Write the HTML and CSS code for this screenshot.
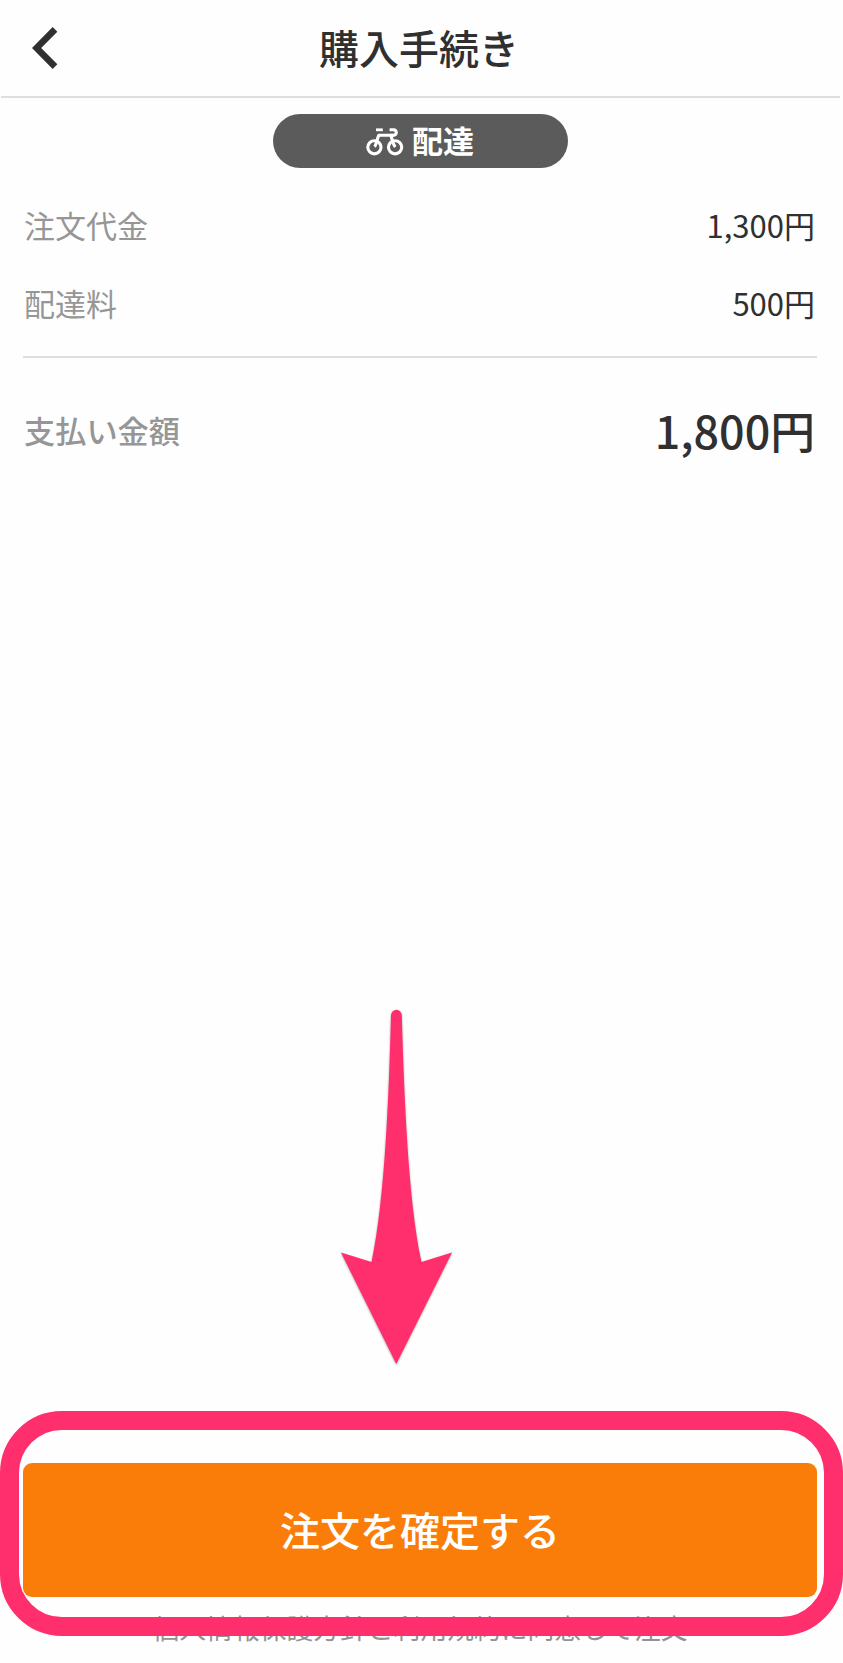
FILE: index.html
```html
<!DOCTYPE html>
<html lang="ja">
<head>
<meta charset="UTF-8">
<meta name="viewport" content="width=device-width, initial-scale=1.0">
<title>購入手続き</title>
<link rel="stylesheet" href="styles.css">
</head>
<body>
    <div class="page">
        <header class="header">
            <a class="back" href="#" aria-label="戻る">
                <svg width="28" height="42" viewBox="0 0 28 42">
                    <path d="M23 2.4 L4.6 21 L23 39.6" fill="none" stroke="#303030" stroke-width="6.6"/>
                </svg>
            </a>
            <h1 class="title">購入手続き</h1>
        </header>

        <main class="content">
            <div class="badge">
                <svg width="38" height="30" viewBox="0 0 38 30" fill="none" stroke="#fff" stroke-width="3.1">
                    <circle cx="8.4" cy="21.3" r="6.6"/>
                    <circle cx="29.1" cy="21.3" r="6.6"/>
                    <path d="M10 3.8 H16.8" stroke-width="2.8"/>
                    <path d="M8.6 20.8 C10.6 18.5 11 13 12.8 9.3 H28" stroke-linejoin="round"/>
                    <path d="M23.6 3.8 H28 A2.8 2.8 0 0 1 28 9.3 H25 C26 14 26.8 18 29.3 21" stroke-linejoin="round"/>
                </svg>
                <span class="badge-text">配達</span>
            </div>

            <dl class="prices">
                <div class="row">
                    <dt>注文代金</dt>
                    <dd>1,300円</dd>
                </div>
                <div class="row">
                    <dt>配達料</dt>
                    <dd>500円</dd>
                </div>
                <div class="row total">
                    <dt>支払い金額</dt>
                    <dd>1,800円</dd>
                </div>
            </dl>
        </main>

        <footer class="footer">
            <button class="submit" type="button">注文を確定する</button>
            <p class="terms">個人情報保護方針と利用規約に同意して注文</p>
        </footer>

        <svg class="arrow" width="120" height="364" viewBox="0 0 120 364">
            <path d="M55 5.2 A5.4 5.4 0 0 1 65.8 5.2 C68 82 72 190 85.5 252 L116 242.5 L60.3 354 L5 242.5 L35.5 252 C49 190 53 82 55 5.2 Z" fill="#ff2e6d"/>
        </svg>
        <div class="frame"></div>
    </div>
</body>
</html>
```
FILE: styles.css
```css
* {
    box-sizing: border-box;
}
body {
    margin: 0;
    background-color: #fefefe;
    color: #303030;
    font-family: "Noto Sans CJK JP", sans-serif;
}
.page {
    position: relative;
    display: flex;
    flex-direction: column;
    height: 1663px;
    overflow: hidden;
}
.header {
    display: grid;
    grid-template-columns: 120px 1fr 123px;
    align-items: center;
    height: 98px;
    margin: 0 3px 0 1px;
    border-bottom: 2px solid #dedede;
}
.back {
    display: flex;
    padding-left: 31px;
}
.title {
    margin: 0;
    padding-bottom: 3px;
    font-size: 40px;
    font-weight: 500;
    line-height: 60px;
    text-align: center;
}
.content {
    flex: 1;
    padding: 16px 26px 0 23px;
}
.badge {
    display: flex;
    justify-content: center;
    align-items: center;
    gap: 8px;
    width: 295px;
    height: 54px;
    margin: 0 auto;
    border-radius: 27px;
    background-color: #5b5b5b;
    color: #fff;
    font-size: 31px;
    font-weight: 700;
    line-height: 46px;
}
.badge-text {
    padding-bottom: 2px;
}
.prices {
    margin: 17px 0 0;
}
.row {
    display: flex;
    justify-content: space-between;
    align-items: center;
    height: 78px;
    padding: 0 2px 0 1px;
    font-size: 31px;
}
.row dt {
    color: #969696;
}
.row dd {
    margin: 0;
}
.total {
    height: 145px;
    margin-top: 15px;
    border-top: 2px solid #dedede;
}
.total dt {
    font-size: 31.2px;
    font-weight: 500;
}
.total dd {
    font-size: 44.8px;
    font-weight: 500;
}
.footer {
    height: 200px;
    padding: 0 26px 0 23px;
}
.submit {
    display: block;
    width: 100%;
    height: 134px;
    padding: 0 0 3px;
    border: none;
    border-radius: 9px;
    background-color: #fa7d0a;
    color: #fff;
    font-family: inherit;
    font-size: 40px;
    font-weight: 500;
    cursor: pointer;
}
.terms {
    margin: 11px 0 0;
    color: #929292;
    font-size: 26.8px;
    line-height: 40px;
    text-align: center;
}
/* pointer and outline drawn over the order button */
.arrow {
    position: absolute;
    top: 1010px;
    left: 336px;
    overflow: visible;
    filter: drop-shadow(0 1px 1px rgba(0, 0, 0, 0.35));
}
.frame {
    position: absolute;
    top: 1411px;
    left: 0;
    width: 843px;
    height: 225px;
    border: 19px solid #ff2e6d;
    border-radius: 62px;
}
```
